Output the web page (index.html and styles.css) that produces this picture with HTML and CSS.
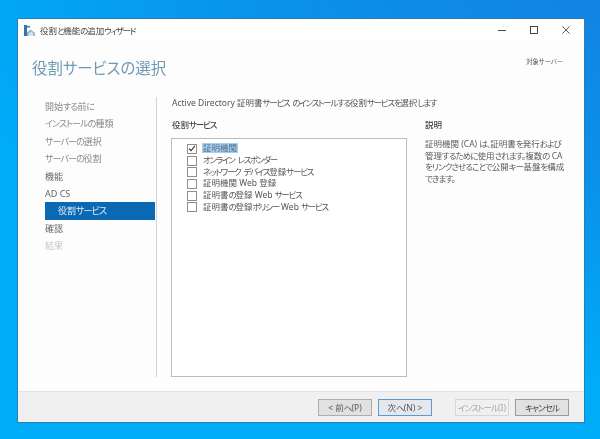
FILE: index.html
```html
<!DOCTYPE html>
<html lang="ja">
<head>
<meta charset="utf-8">
<title>役割と機能の追加ウィザード</title>
<link rel="stylesheet" href="styles.css">
</head>
<body>
<div class="window">
  <header class="titlebar">
    <svg class="app-icon" width="11" height="11" viewBox="0 0 11 11">
      <rect x="0" y="0" width="3" height="11" fill="#2f77ad"/>
      <rect x="3" y="1" width="3" height="1.5" fill="#2f77ad"/>
      <path d="M3 11 L3 7.5 L6.5 4.5 L11 8 L11 11 Z" fill="#8fb2cc"/>
      <path d="M4.5 11 L4.5 8.5 L7 6.5 L9.5 8.5 L9.5 11 Z" fill="#d5e2ec"/>
    </svg>
    <span class="title-text">役割<span class="k">と</span>機能<span class="k">の</span>追加<span class="k">ウィザード</span></span>
    <div class="controls">
      <svg width="8" height="8" viewBox="0 0 8 8"><path d="M0 4.5H8" stroke="#333" stroke-width="0.9"/></svg>
      <svg width="8" height="8" viewBox="0 0 8 8"><rect x="0.5" y="0.5" width="7" height="7" fill="none" stroke="#333" stroke-width="0.9"/></svg>
      <svg width="8" height="8" viewBox="0 0 8 8"><path d="M0.3 0.3L7.7 7.7M7.7 0.3L0.3 7.7" stroke="#333" stroke-width="0.8"/></svg>
    </div>
  </header>
  <div class="page-head">
    <h1 class="page-title">役割サービスの選択</h1>
    <div class="target">対象サーバー</div>
  </div>
  <main class="body">
    <nav class="nav">
      <div class="nav-item">開始<span class="k">する</span>前<span class="k">に</span></div>
      <div class="nav-item"><span class="k">インストールの</span>種類</div>
      <div class="nav-item"><span class="k">サーバーの</span>選択</div>
      <div class="nav-item"><span class="k">サーバーの</span>役割</div>
      <div class="nav-item done">機能</div>
      <div class="nav-item done">AD CS</div>
      <div class="nav-item active">役割<span class="k">サービス</span></div>
      <div class="nav-item done">確認</div>
      <div class="nav-item muted">結果</div>
    </nav>
    <section class="content">
      <p class="intro">Active Directory 証明書<span class="k">サービス のインストールする</span>役割<span class="k">サービスを</span>選択<span class="k">します</span></p>
      <div class="columns">
        <div class="services">
          <h2 class="section-title">役割<span class="k">サービス</span></h2>
          <div class="listbox">
            <div class="row"><span class="check"><svg width="9" height="9" viewBox="0 0 9 9"><path d="M1.2 4.6L3.4 7L7.8 1.4" fill="none" stroke="#222" stroke-width="1.2"/></svg></span><span class="label selected">証明機関</span></div>
            <div class="row"><span class="check"></span><span class="label"><span class="k">オンライン レスポンダー</span></span></div>
            <div class="row"><span class="check"></span><span class="label"><span class="k">ネットワーク デバイス</span>登録<span class="k">サービス</span></span></div>
            <div class="row"><span class="check"></span><span class="label">証明機関 Web 登録</span></div>
            <div class="row"><span class="check"></span><span class="label">証明書<span class="k">の</span>登録 Web <span class="k">サービス</span></span></div>
            <div class="row"><span class="check"></span><span class="label">証明書<span class="k">の</span>登録<span class="k">ポリシー</span> Web <span class="k">サービス</span></span></div>
          </div>
        </div>
        <aside class="desc">
          <h2 class="section-title">説明</h2>
          <p class="desc-text">証明機関 (CA) <span class="k">は、</span>証明書<span class="k">を</span>発行<span class="k">および</span><br>管理<span class="k">するために</span>使用<span class="k">されます。</span>複数<span class="k">の</span> CA<br><span class="k">をリンクさせることで</span>公開<span class="k">キー</span>基盤<span class="k">を</span>構成<br><span class="k">できます。</span></p>
        </aside>
      </div>
    </section>
  </main>
  <footer class="footer">
    <button class="btn">&lt; 前<span class="k">へ</span>(P)</button>
    <button class="btn primary">次<span class="k">へ</span>(N) &gt;</button>
    <button class="btn disabled install"><span class="k">インストール</span>(I)</button>
    <button class="btn cancel"><span class="k">キャンセル</span></button>
  </footer>
</div>
</body>
</html>
```
FILE: styles.css
```css
* { box-sizing: border-box; }
html, body { margin: 0; height: 100%; }
body {
  width: 600px;
  height: 439px;
  overflow: hidden;
  position: relative;
  background:
    radial-gradient(ellipse 700px 420px at 640px -40px, rgba(24,120,220,0.85) 0%, rgba(16,130,225,0.6) 55%, rgba(0,170,250,0) 100%),
    #00abf8;
  font-family: "Noto Sans", "Noto Sans CJK JP", sans-serif;
  font-feature-settings: "palt";
  color: #555;
  font-size: 8px;
}
.k { letter-spacing: -0.9px; word-spacing: 2px; }
.window {
  position: absolute;
  left: 17px;
  top: 18px;
  width: 568px;
  height: 405px;
  background: #fff;
  border: 1px solid #2a7fb2;
  display: flex;
  flex-direction: column;
  filter: blur(0.25px);
}
.titlebar {
  height: 22px;
  display: flex;
  align-items: center;
  padding: 0 0 0 6px;
  flex: none;
}
.app-icon { flex: none; }
.title-text { margin: 0 0 1px 5px; font-size: 8.5px; color: #444; white-space: nowrap; }
.title-text .k { letter-spacing: -1.3px; }
.controls {
  margin-left: auto;
  display: flex;
  gap: 24px;
  padding-right: 14px;
  align-items: center;
}
.controls svg { display: block; }
.page-head {
  height: 47px;
  flex: none;
  display: flex;
  justify-content: space-between;
  padding: 17px 21px 0 14px;
  background: #fdfdfd;
}
.page-title {
  margin: 0;
  font-size: 15.4px;
  font-weight: 400;
  line-height: 22px;
  color: #6f9ab6;
  white-space: nowrap;
}
.target {
  font-size: 6.3px;
  line-height: 8px;
  color: #555;
  white-space: nowrap;
}
.body {
  flex: 1;
  display: flex;
  background: #fdfdfd;
  padding: 9px 0 14px 27px;
  min-height: 0;
}
.nav {
  width: 112px;
  flex: none;
  border-right: 1px solid #d2d2d2;
  padding-top: 1px;
  display: flex;
  flex-direction: column;
}
.nav-item {
  height: 17.4px;
  line-height: 17.4px;
  font-size: 9px;
  color: #8a8a8a;
  margin-right: 1px;
  white-space: nowrap;
}
.nav-item.done { color: #666; }
.nav-item.muted { color: #c6c6c6; }
.nav-item.active {
  background: #0b69b3;
  color: #e4eff8;
  padding-left: 13px;
}
.content {
  flex: 1;
  display: flex;
  flex-direction: column;
  padding: 0 0 0 15px;
  min-width: 0;
}
.intro {
  margin: 0;
  font-size: 8.5px;
  line-height: 12px;
  color: #555;
  white-space: nowrap;
}
.intro .k { letter-spacing: -1.25px; }
.columns {
  flex: 1;
  display: flex;
  padding-top: 10px;
  min-height: 0;
}
.services {
  width: 236px;
  flex: none;
  display: flex;
  flex-direction: column;
  margin-left: -1px;
}
.section-title {
  margin: 0 0 0 1px;
  font-size: 8.5px;
  line-height: 12px;
  font-weight: 500;
  color: #444;
}
.section-title .k { letter-spacing: -1.2px; }
.listbox {
  margin-top: 7px;
  flex: 1;
  border: 1px solid #bdbdbd;
  background: #fff;
  padding: 4px 0 0 15px;
}
.row {
  display: flex;
  align-items: center;
  height: 11.7px;
}
.check {
  width: 10px;
  height: 10px;
  border: 1px solid #8e8e8e;
  background: #fff;
  flex: none;
  display: flex;
  align-items: center;
  justify-content: center;
}
.label {
  margin: 0 0 1px 5px;
  padding: 0 1px;
  font-size: 8.5px;
  line-height: 10px;
  color: #555;
  white-space: nowrap;
}
.label .k { letter-spacing: -1.25px; }
.label.selected { background: #a9cdea; color: #4d6f8c; }
.desc {
  margin-left: 18px;
  flex: 1;
}
.desc .section-title { margin-left: 0; }
.desc-text {
  margin: 7px 0 0;
  font-size: 8.5px;
  line-height: 11.7px;
  color: #5c5c5c;
  white-space: nowrap;
}
.footer {
  height: 31px;
  flex: none;
  background: #f0f0f0;
  border-top: 1px solid #e3e3e3;
  display: flex;
  align-items: flex-start;
  padding: 7px 15px 0 0;
  justify-content: flex-end;
  gap: 6px;
}
.btn {
  width: 54px;
  height: 17px;
  padding: 0;
  background: #e1e1e1;
  border: 1px solid #adadad;
  font-family: inherit;
  font-feature-settings: inherit;
  font-size: 8.5px;
  white-space: nowrap;
  color: #555;
  line-height: 14px;
}
.btn.primary { background: #e4e8ec; border-color: #5b9bd0; }
.btn.disabled { background: #f0f0f0; border-color: #d6d6d6; color: #a8a8a8; }
.btn.install { margin-left: 17px; }
.btn.cancel { color: #444; border-color: #9a9a9a; }
```
